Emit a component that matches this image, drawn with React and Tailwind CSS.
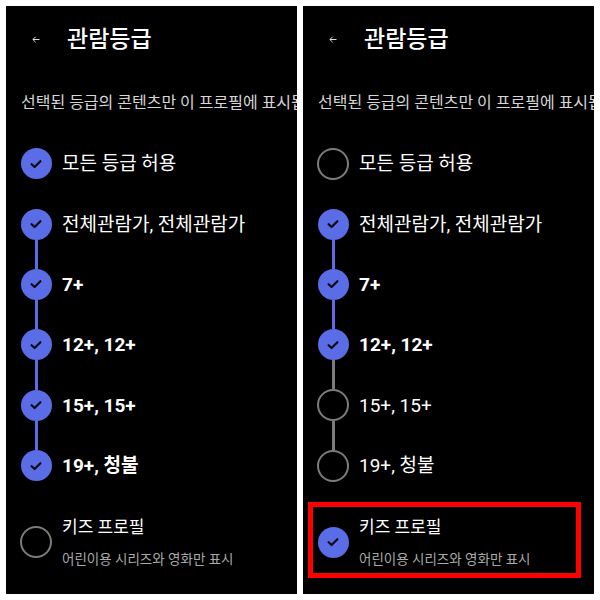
import React from "react";

const FONT = { fontFamily: 'Roboto, "Noto Sans CJK KR", "Noto Sans", sans-serif' };

function Mark({ checked }) {
  if (checked) {
    return (
      <div className="w-[31px] h-[31px] shrink-0 rounded-full bg-[#5a6de6] flex items-center justify-center">
        <svg width="12" height="10" viewBox="0 0 12 10">
          <path d="M1.6 5.2 L4.6 8 L10.4 2.2" fill="none" stroke="#0b0b14" strokeWidth="2.2" strokeLinecap="round" strokeLinejoin="round" />
        </svg>
      </div>
    );
  }
  return <div className="w-[32px] h-[32px] shrink-0 rounded-full border-2 border-[#7c7c7c]" />;
}

function Seg({ color }) {
  if (!color) return <div className="flex-1 w-[3px]" />;
  return <div className={color === "blue" ? "flex-1 w-[3px] bg-[#5a6de6]" : "flex-1 w-[3px] bg-[#7c7c7c]"} />;
}

function Row({ label, checked, bold, top, bottom }) {
  return (
    <div className="flex items-stretch h-[60.4px] pl-[14px]">
      <div className="w-[32px] flex flex-col items-center">
        <Seg color={top} />
        <Mark checked={checked} />
        <Seg color={bottom} />
      </div>
      <div
        className={
          bold
            ? "ml-[10px] flex items-center text-[19px] font-bold text-white leading-none whitespace-nowrap"
            : "ml-[10px] flex items-center text-[19px] font-normal text-white leading-none whitespace-nowrap"
        }
      >
        {label}
      </div>
    </div>
  );
}

const TIERS = [
  { label: "전체관람가, 전체관람가", boldNum: false },
  { label: "7+", boldNum: true },
  { label: "12+, 12+", boldNum: true },
  { label: "15+, 15+", boldNum: true },
  { label: "19+, 청불", boldNum: true },
];

function Panel({ all, tiers, kids }) {
  const segColor = (i, j) => (tiers[i] && tiers[j] ? "blue" : "gray");
  return (
    <div className="w-[291px] h-[588px] bg-black overflow-hidden relative" style={FONT}>
      <div className="h-[67px] flex items-center">
        <div className="w-[61px] flex items-center pl-[26px]">
          <svg width="8" height="7" viewBox="0 0 8 7">
            <path d="M7.5 3.5 H1 M3.6 0.8 L0.9 3.5 L3.6 6.2" fill="none" stroke="#e0e0e0" strokeWidth="1" />
          </svg>
        </div>
        <div className="text-[23px] font-medium text-white leading-none">관람등급</div>
      </div>
      <div className="mt-[19px] pl-[15px] h-[22px] flex items-center whitespace-nowrap text-[16px] text-[#d6d6d6] leading-none">
        선택된 등급의 콘텐츠만 이 프로필에 표시됩니다
      </div>
      <div className="mt-[19.5px]">
        <Row label="모든 등급 허용" checked={all} bold={false} top={null} bottom={null} />
        {TIERS.map((t, i) => (
          <Row
            key={t.label}
            label={t.label}
            checked={tiers[i]}
            bold={t.boldNum && tiers[i]}
            top={i === 0 ? null : segColor(i - 1, i)}
            bottom={i === TIERS.length - 1 ? null : segColor(i, i + 1)}
          />
        ))}
      </div>
      <div className="relative mt-[19px] flex items-center pl-[14px]">
        <div className="w-[32px] flex justify-center">
          <Mark checked={kids} />
        </div>
        <div className="ml-[10px] flex flex-col">
          <div className="h-[26px] flex items-center text-[17px] font-normal text-white leading-none">키즈 프로필</div>
          <div className="mt-[9px] h-[20px] flex items-center text-[13.5px] text-[#a9a9a9] leading-none">어린이용 시리즈와 영화만 표시</div>
        </div>
        {kids && (
          <div className="absolute left-[5px] top-[-13px] w-[273px] h-[76px] border-[5px] border-[#ff0000] pointer-events-none" />
        )}
      </div>
    </div>
  );
}

export default function App() {
  return (
    <div className="w-[600px] h-[600px] bg-white flex gap-[6px] p-[6px]">
      <Panel all={true} tiers={[true, true, true, true, true]} kids={false} />
      <Panel all={false} tiers={[true, true, true, false, false]} kids={true} />
    </div>
  );
}
